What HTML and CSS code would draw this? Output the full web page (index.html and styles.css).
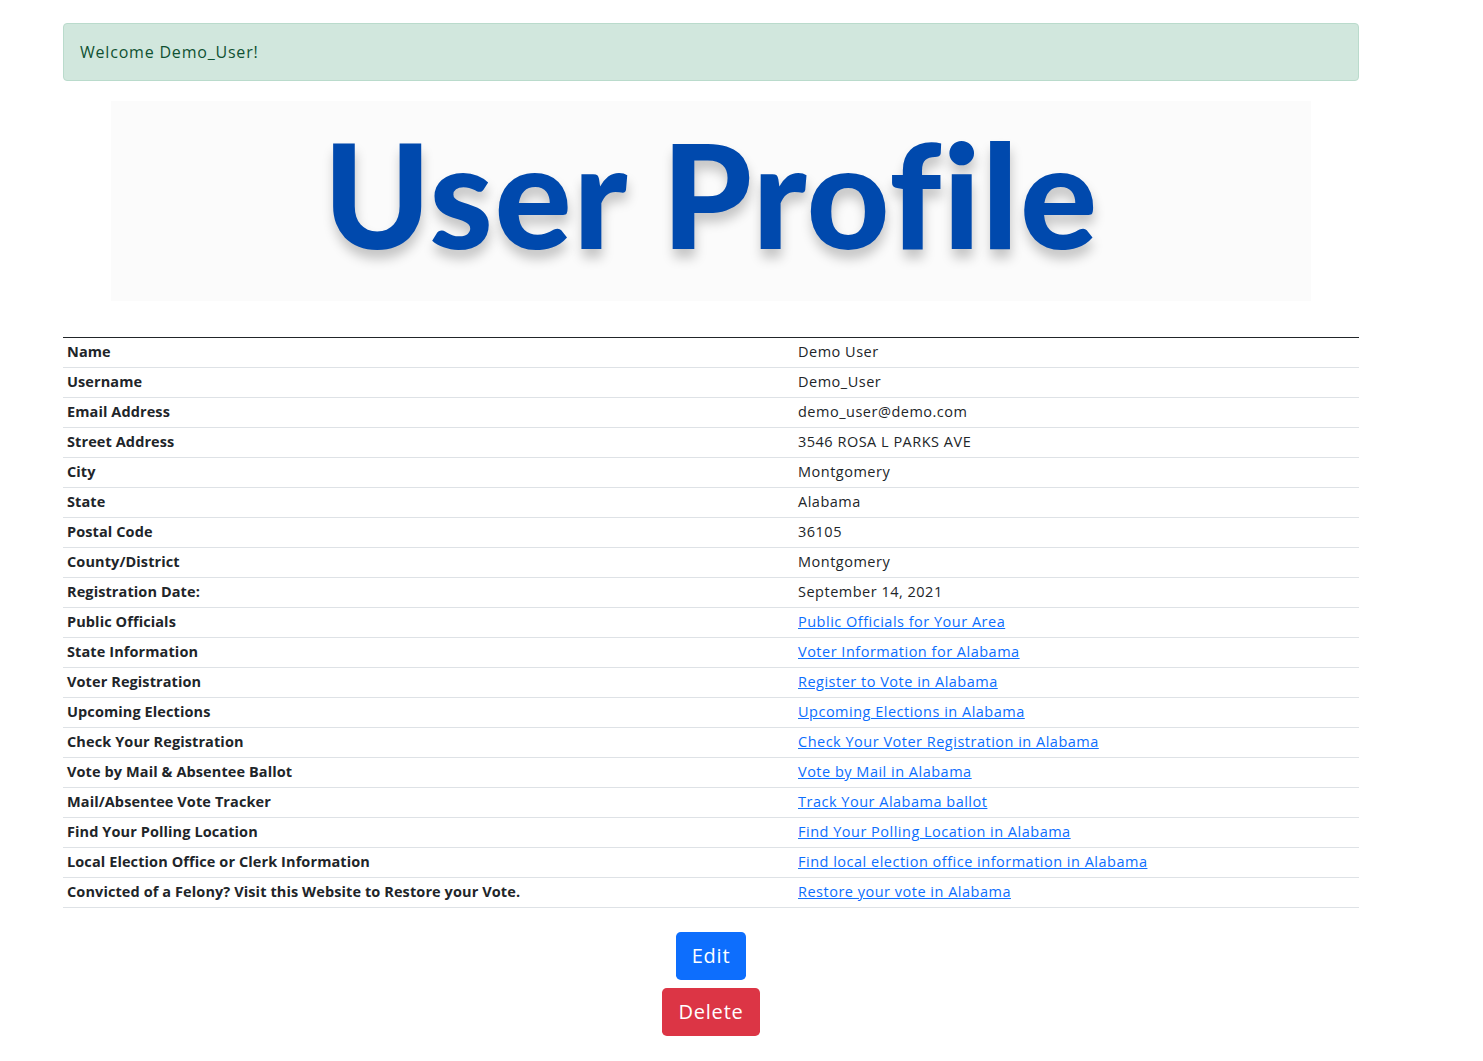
FILE: index.html
```html
<!DOCTYPE html>
<html lang="en">
<head>
<meta charset="utf-8">
<title>User Profile</title>
<link rel="stylesheet" href="styles.css">
</head>
<body>
<div class="container">
  <div class="alert">Welcome Demo_User!</div>
  <div class="banner">
    <h1 class="banner-title">User Profile</h1>
  </div>
  <table class="profile">
    <tbody>
      <tr><th>Name</th><td>Demo User</td></tr>
      <tr><th>Username</th><td>Demo_User</td></tr>
      <tr><th>Email Address</th><td>demo_user@demo.com</td></tr>
      <tr><th>Street Address</th><td>3546 ROSA L PARKS AVE</td></tr>
      <tr><th>City</th><td>Montgomery</td></tr>
      <tr><th>State</th><td>Alabama</td></tr>
      <tr><th>Postal Code</th><td>36105</td></tr>
      <tr><th>County/District</th><td>Montgomery</td></tr>
      <tr><th>Registration Date:</th><td>September 14, 2021</td></tr>
      <tr><th>Public Officials</th><td><a href="#">Public Officials for Your Area</a></td></tr>
      <tr><th>State Information</th><td><a href="#">Voter Information for Alabama</a></td></tr>
      <tr><th>Voter Registration</th><td><a href="#">Register to Vote in Alabama</a></td></tr>
      <tr><th>Upcoming Elections</th><td><a href="#">Upcoming Elections in Alabama</a></td></tr>
      <tr><th>Check Your Registration</th><td><a href="#">Check Your Voter Registration in Alabama</a></td></tr>
      <tr><th>Vote by Mail &amp; Absentee Ballot</th><td><a href="#">Vote by Mail in Alabama</a></td></tr>
      <tr><th>Mail/Absentee Vote Tracker</th><td><a href="#">Track Your Alabama ballot</a></td></tr>
      <tr><th>Find Your Polling Location</th><td><a href="#">Find Your Polling Location in Alabama</a></td></tr>
      <tr><th>Local Election Office or Clerk Information</th><td><a href="#">Find local election office information in Alabama</a></td></tr>
      <tr><th>Convicted of a Felony? Visit this Website to Restore your Vote.</th><td><a href="#">Restore your vote in Alabama</a></td></tr>
    </tbody>
  </table>
  <div class="actions">
    <a href="#" class="btn btn-primary">Edit</a>
    <a href="#" class="btn btn-danger">Delete</a>
  </div>
</div>
</body>
</html>
```
FILE: styles.css
```css
html, body {
  margin: 0;
  padding: 0;
  background: #fff;
}
body {
  font-family: "Open Sans", "Liberation Sans", sans-serif;
  color: #212529;
}
.container {
  width: 1296px;
  margin-left: 63px;
  padding-top: 23px;
  padding-bottom: 25px;
}
.alert {
  box-sizing: border-box;
  height: 58px;
  padding: 16px;
  border: 1px solid #badbcc;
  border-radius: 4px;
  background: #d1e7dd;
  color: #0f5132;
  font-size: 16px;
  line-height: 24px;
  letter-spacing: 0.8px;
}
.banner {
  width: 1200px;
  height: 200px;
  margin: 20px auto 36px;
  background: #fbfbfb;
  display: flex;
  align-items: center;
  justify-content: center;
}
.banner-title {
  margin: 0;
  font-family: Lato, "Open Sans", sans-serif;
  font-weight: 900;
  font-size: 144px;
  line-height: 1;
  color: #0049ad;
  letter-spacing: 1.5px;
  text-shadow: 1px 9px 12px rgba(0, 0, 0, 0.22);
  margin-top: -14px;
}
.profile {
  width: 100%;
  border-collapse: collapse;
  border-top: 1px solid #212529;
  font-size: 14.5px;
  line-height: 21px;
}
.profile th,
.profile td {
  padding: 3px 4px 5px;
  border-bottom: 1px solid #dee2e6;
  text-align: left;
  vertical-align: top;
}
.profile th {
  width: 723px;
  font-weight: 700;
  letter-spacing: 0.1px;
}
.profile td {
  font-weight: 400;
  letter-spacing: 0.5px;
}
.profile a {
  color: #0d6efd;
  text-decoration: underline;
}
.actions {
  margin-top: 24px;
  display: flex;
  flex-direction: column;
  align-items: center;
  gap: 8px;
}
.btn {
  display: inline-block;
  box-sizing: border-box;
  height: 48px;
  padding: 9px 16px 7px;
  font-size: 20px;
  line-height: 30px;
  letter-spacing: 0.8px;
  border-radius: 4.8px;
  color: #fff;
  text-decoration: none;
}
.btn-primary {
  background: #0d6efd;
}
.btn-danger {
  background: #dc3545;
}
```
